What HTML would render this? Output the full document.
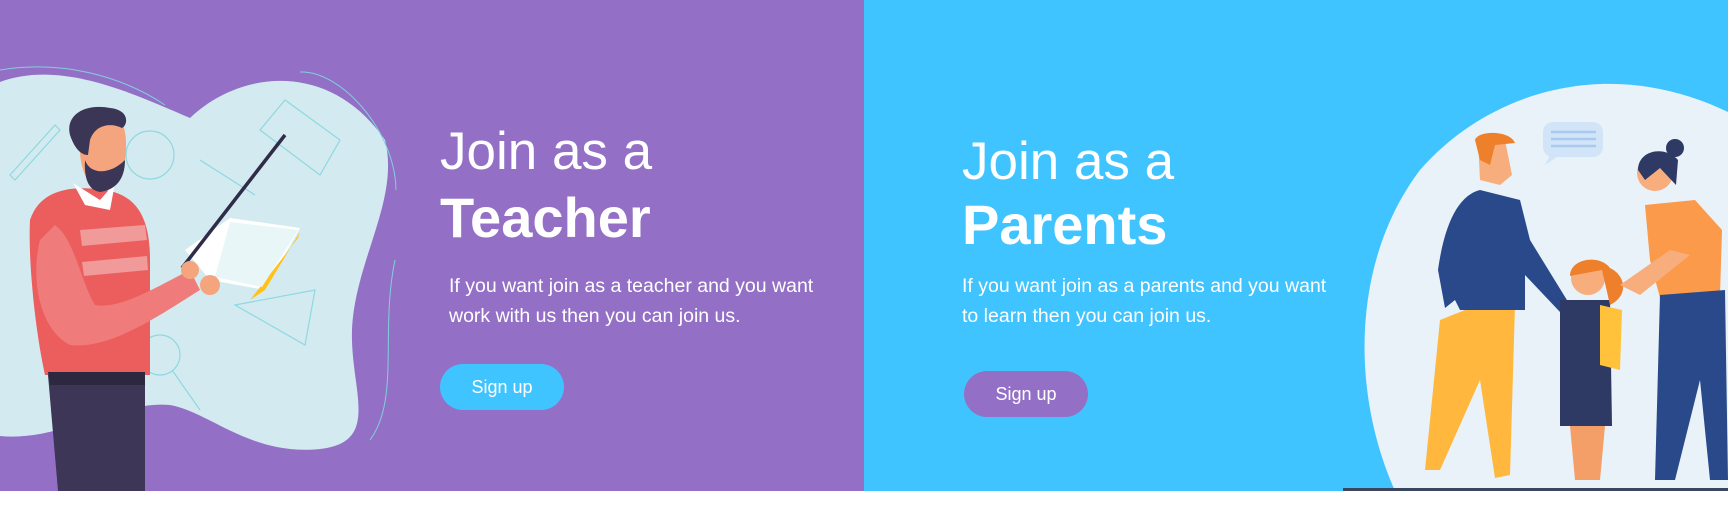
<!DOCTYPE html>
<html><head><meta charset="utf-8"><style>
*{margin:0;padding:0;box-sizing:border-box}
body{width:1728px;height:524px;background:#fff;position:relative;overflow:hidden;font-family:"Liberation Sans",sans-serif;color:#fff}
.p{position:absolute;top:0;height:491px}
.t{position:absolute;white-space:nowrap}
.j{font-size:53px;font-weight:400;line-height:1}
.b{font-size:56px;font-weight:700;line-height:1}
.para{font-size:19.5px;line-height:30px}
.btn{position:absolute;height:46px;border-radius:23px;font-size:18px;text-align:center;line-height:46px}
</style></head><body>
<div class="p" style="left:0;width:864px;background:#9370c6"></div>
<div class="p" style="left:864px;width:864px;background:#40c4ff"></div>
<svg width="1728" height="491" style="position:absolute;left:0;top:0">
<path d="M0,82 C60,60 130,92 190,118 C240,70 330,60 385,140 C400,200 355,260 352,330 C350,390 382,442 320,449 C250,456 210,412 170,405 C120,400 60,442 0,436 Z" fill="#d3ebf0"/>
<path d="M0,70 C60,60 120,75 165,105 M300,72 C340,70 395,130 396,190 M395,260 C380,330 400,400 370,440" stroke="#7fd0dd" fill="none" stroke-width="1"/>
<g stroke="#8fd8e0" fill="none" stroke-width="1.2">
<path d="M10,175 L55,125 L60,130 L15,180 Z"/><path d="M260,130 L285,100 L340,140 L320,175 Z"/><path d="M235,305 L315,290 L305,345 Z"/><circle cx="160" cy="355" r="20"/><path d="M172,370 L200,410"/><path d="M200,160 L255,195"/><circle cx="150" cy="155" r="24"/>
</g>
<path d="M30,220 C40,190 70,185 105,190 C135,195 150,215 150,260 L150,375 L45,375 C35,330 28,260 30,220 Z" fill="#ec5d5d"/>
<path d="M80,230 L145,225 L147,240 L82,246 Z M82,262 L147,256 L148,270 L84,276 Z" fill="#f19a9a"/>
<path d="M40,240 C30,280 40,330 70,345 C110,350 160,315 200,290 L190,270 C160,285 120,310 95,305 C80,280 75,240 55,225 Z" fill="#f07b7b"/>
<path d="M73,183 L100,200 L115,183 L110,210 L85,205 Z" fill="#fff"/>
<path d="M48,375 L145,375 L145,491 L58,491 Z" fill="#3d3656"/>
<path d="M48,372 L145,372 L145,385 L50,385 Z" fill="#2c2840"/>
<path d="M80,150 C80,130 90,115 108,115 C125,115 128,135 125,160 C122,180 110,190 95,188 C85,180 80,165 80,150 Z" fill="#f5a57d"/>
<path d="M70,135 C65,115 85,103 110,108 C130,110 128,125 122,128 C110,122 95,125 90,140 L88,155 C82,155 75,150 70,135 Z" fill="#3b3656"/>
<path d="M85,160 C90,175 110,175 125,160 C125,180 115,190 100,192 C88,190 84,178 85,160 Z" fill="#3b3656"/>
<path d="M185,250 L230,218 L300,228 L265,290 L210,280 Z" fill="#fff"/>
<path d="M265,290 L300,232 L298,238 L250,300 Z" fill="#ffc21a"/>
<path d="M230,222 L298,230 L262,287 L215,277 Z" fill="#e8f6f7"/>
<path d="M285,135 L182,268" stroke="#2f2b48" stroke-width="3.5"/>
<circle cx="190" cy="270" r="9" fill="#f5a57d"/><circle cx="210" cy="285" r="10" fill="#f5a57d"/>
<path d="M1395,491 C1350,390 1352,260 1420,170 C1490,90 1610,55 1728,112 L1728,491 Z" fill="#e9f2f9"/>
<rect x="1343" y="488" width="385" height="3" fill="#3a4560"/>
<rect x="1543" y="122" width="60" height="35" rx="10" fill="#d2e4f8"/><path d="M1550,155 L1545,165 L1560,155 Z" fill="#d2e4f8"/>
<path d="M1551,132 H1596 M1551,139 H1596 M1551,146 H1596" stroke="#a9c9ef" stroke-width="2.5"/>
<path d="M1440,320 L1490,300 L1515,305 L1510,475 L1495,478 L1480,380 L1440,470 L1425,470 Z" fill="#ffb83d"/>
<path d="M1480,190 L1520,200 L1530,240 L1570,305 L1560,312 L1525,275 L1525,310 L1460,310 L1455,300 L1445,308 L1438,270 C1445,220 1460,195 1480,190 Z" fill="#29498b"/>
<path d="M1478,140 H1505 L1512,175 L1500,185 L1480,180 Z" fill="#f8ad7c"/><path d="M1475,140 C1478,130 1510,130 1515,143 L1495,145 L1490,165 L1480,160 Z" fill="#ee7f2b"/>
<path d="M1560,300 L1610,300 L1612,426 L1560,426 Z" fill="#2e3a64"/><path d="M1600,305 L1622,310 L1620,370 L1600,365 Z" fill="#ffc23a"/>
<path d="M1570,426 H1605 L1600,480 H1575 Z" fill="#f49f68"/>
<circle cx="1588" cy="278" r="17" fill="#f8ad7c"/><path d="M1570,276 C1570,258 1600,254 1610,268 C1625,275 1630,295 1610,305 L1602,270 L1575,275 Z" fill="#ee7f2b"/>
<path d="M1645,205 L1695,200 L1722,230 L1720,295 L1660,298 L1650,260 Z" fill="#fa9a4a"/>
<path d="M1660,295 L1725,290 L1728,480 L1710,480 L1700,380 L1675,480 L1655,480 Z" fill="#29498b"/>
<path d="M1620,285 L1670,250 L1690,255 L1640,295 Z" fill="#f8ad7c"/>
<circle cx="1655" cy="173" r="18" fill="#f8ad7c"/><path d="M1638,170 C1638,150 1665,145 1678,160 L1676,185 L1660,168 L1645,180 Z" fill="#2e3a64"/><circle cx="1675" cy="148" r="9" fill="#2e3a64"/>
</svg>
<div class="t j" style="left:440px;top:125px">Join as a</div>
<div class="t b" style="left:440px;top:190px">Teacher</div>
<div class="t para" style="left:449px;top:271px">If you want join as a teacher and you want<br>work with us then you can join us.</div>
<div class="btn" style="left:440px;top:364px;width:124px;background:#40c4ff">Sign up</div>
<div class="t j" style="left:962px;top:135px">Join as a</div>
<div class="t b" style="left:962px;top:197px">Parents</div>
<div class="t para" style="left:962px;top:271px">If you want join as a parents and you want<br>to learn then you can join us.</div>
<div class="btn" style="left:964px;top:371px;width:124px;background:#9370c6">Sign up</div>
</body></html>
